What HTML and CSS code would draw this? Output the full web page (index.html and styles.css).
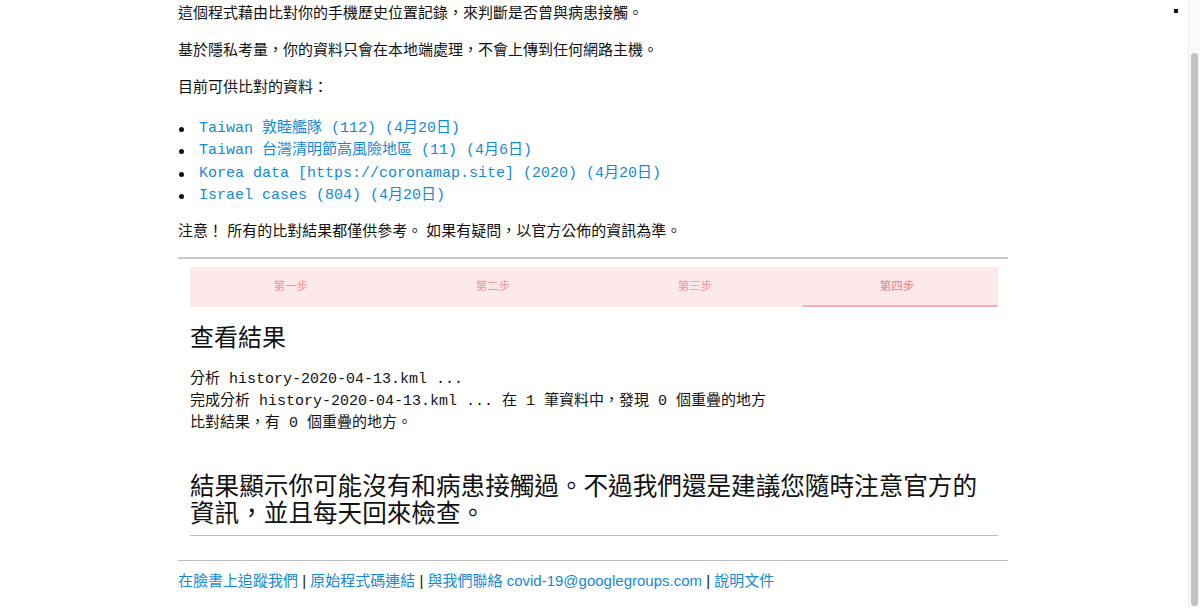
FILE: index.html
```html
<!DOCTYPE html>
<html lang="zh-Hant">
<head>
<meta charset="utf-8">
<title>比對結果</title>
<link rel="stylesheet" href="styles.css">
</head>
<body>
<div class="shell">
  <main class="page">
    <span class="dot"></span>
    <div class="container">
      <p>這個程式藉由比對你的手機歷史位置記錄，來判斷是否曾與病患接觸。</p>
      <p>基於隱私考量，你的資料只會在本地端處理，不會上傳到任何網路主機。</p>
      <p>目前可供比對的資料：</p>
      <ul class="sources">
        <li><a href="#">Taiwan 敦睦艦隊 (112) (4月20日)</a></li>
        <li><a href="#">Taiwan 台灣清明節高風險地區 (11) (4月6日)</a></li>
        <li><a href="#">Korea data [https://coronamap.site] (2020) (4月20日)</a></li>
        <li><a href="#">Israel cases (804) (4月20日)</a></li>
      </ul>
      <p>注意！ 所有的比對結果都僅供參考。 如果有疑問，以官方公佈的資訊為準。</p>
      <hr class="rule">
      <section class="step">
        <nav class="tabs">
          <span class="tab">第一步</span>
          <span class="tab">第二步</span>
          <span class="tab">第三步</span>
          <span class="tab active">第四步</span>
        </nav>
        <h2 class="step-title">查看結果</h2>
        <div class="log">
          <div>分析 history-2020-04-13.kml ...</div>
          <div>完成分析 history-2020-04-13.kml ... 在 1 筆資料中，發現 0 個重疊的地方</div>
          <div>比對結果，有 0 個重疊的地方。</div>
        </div>
        <h2 class="verdict">結果顯示你可能沒有和病患接觸過。不過我們還是建議您隨時注意官方的資訊，並且每天回來檢查。</h2>
        <hr class="rule-thin">
      </section>
      <hr class="rule-foot">
      <footer class="footer">
        <a href="#">在臉書上追蹤我們</a> | <a href="#">原始程式碼連結</a> | <a href="#">與我們聯絡 covid-19@googlegroups.com</a> | <a href="#">說明文件</a>
      </footer>
    </div>
  </main>
  <div class="scrollbar"><div class="thumb"></div></div>
</div>
</body>
</html>
```
FILE: styles.css
```css
html, body {
  margin: 0;
  padding: 0;
  height: 608px;
  overflow: hidden;
  background: #fff;
}
body {
  font-family: "Liberation Sans", "Noto Sans CJK TC", sans-serif;
  font-size: 15px;
  line-height: 22.5px;
  color: #111;
}
.shell {
  display: flex;
  height: 608px;
}
.page {
  flex: 1;
  position: relative;
  padding-top: 2px;
  padding-right: 2px;
}
.dot {
  position: absolute;
  left: 1174px;
  top: 9px;
  width: 4px;
  height: 4px;
  background: #111;
}
.container {
  width: 830px;
  margin: 0 auto;
}
p {
  margin: 0 0 14.5px;
}
a {
  color: #1589d6;
  text-decoration: none;
}
.sources {
  margin: 19px 0 12px;
  padding-left: 21px;
  font-family: "Liberation Mono", "Noto Sans CJK TC", monospace;
  font-size: 15px;
  line-height: 22.5px;
  list-style: none;
}
.sources li {
  position: relative;
}
.sources li::before {
  content: "";
  position: absolute;
  left: -20px;
  top: 9px;
  width: 5px;
  height: 5px;
  border-radius: 50%;
  background: #111;
}
.rule {
  border: 0;
  height: 2px;
  background: #c8c8c8;
  margin: 14px 0 0;
}
.step {
  padding: 0 10px 0 12px;
}
.tabs {
  display: grid;
  grid-template-columns: repeat(4, 1fr);
  margin-top: 8px;
  background: #fde8ea;
  height: 40px;
}
.tab {
  position: relative;
  display: flex;
  align-items: center;
  justify-content: center;
  font-size: 11.5px;
  color: #f2939a;
  box-sizing: border-box;
}
.tab.active {
  color: #ec7c85;
}
.tab.active::after {
  content: "";
  position: absolute;
  left: 7px;
  right: 0;
  bottom: 0;
  height: 2px;
  background: #f5aeb3;
}
.step-title {
  margin: 16px 0 0;
  font-size: 24px;
  line-height: 29px;
  font-weight: normal;
  color: #111;
}
.log {
  margin-top: 17px;
  font-family: "Liberation Mono", "Noto Sans CJK TC", monospace;
  font-size: 15px;
  line-height: 22px;
}
.verdict {
  margin: 38px 0 0;
  font-size: 24.6px;
  line-height: 27px;
  font-weight: normal;
  color: #111;
}
.rule-thin {
  border: 0;
  height: 1px;
  background: #bdbdbd;
  margin: 8px 0 0;
}
.rule-foot {
  border: 0;
  height: 1px;
  background: #bdbdbd;
  margin: 24px 0 0;
}
.footer {
  margin-top: 9px;
  font-size: 15px;
  line-height: 22.5px;
  color: #111;
}
.scrollbar {
  width: 11px;
  flex: none;
  height: 608px;
  background: #f9f9fb;
  border-left: 1px solid #ececec;
}
.thumb {
  margin: 53px auto 0;
  width: 7px;
  height: 553px;
  border-radius: 4px;
  background: #c1c1c1;
}
```
